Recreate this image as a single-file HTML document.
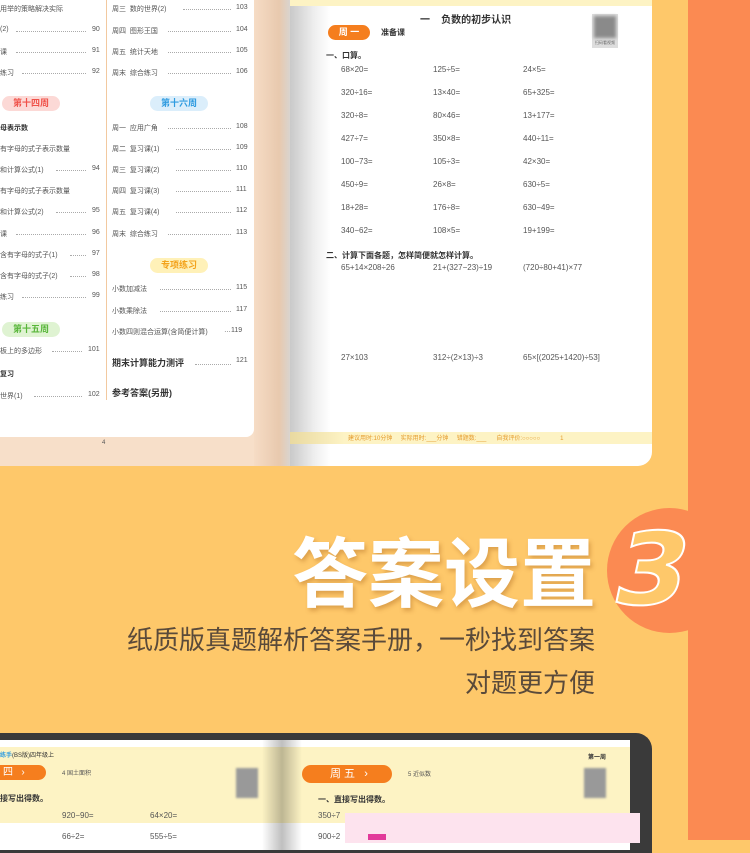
<!DOCTYPE html>
<html><head><meta charset="utf-8"><style>
*{margin:0;padding:0;box-sizing:border-box}
body{width:750px;height:840px;overflow:hidden;background:#fec86a;position:relative;font-family:"Liberation Sans","Noto Sans CJK SC",sans-serif;color:#333}
.abs{position:absolute;white-space:nowrap}
.t{font-size:7px;color:#555}
.dots{position:absolute;border-bottom:1px dotted #aaa;height:1px}
.m{font-size:8px;color:#555}
</style></head><body>
<!-- top book -->
<div class="abs" style="left:0;top:0;width:290px;height:466px;background:#f7dfc9"></div>
<div class="abs" style="left:0;top:0;width:254px;height:437px;background:#fff;border-radius:0 0 8px 0"></div>
<div class="abs" style="left:254px;top:0;width:36px;height:466px;background:linear-gradient(90deg,#f6dcc5,#e8c9ae 70%,#d9d4cf)"></div>
<div class="abs" style="left:106px;top:0;width:1px;height:400px;background:#f2c9a0"></div>
<div class="abs t" style="left:102px;top:440px;font-size:6px">4</div>
<!-- left col -->
<div class="abs t" style="left:0;top:4px">用举的策略解决实际</div>
<div class="abs t" style="left:0;top:26px">(2)</div><div class="dots" style="left:16px;top:31px;width:70px"></div><div class="abs t" style="left:92px;top:26px">90</div>
<div class="abs t" style="left:0;top:47px">课</div><div class="dots" style="left:16px;top:52px;width:70px"></div><div class="abs t" style="left:92px;top:47px">91</div>
<div class="abs t" style="left:0;top:68px">练习</div><div class="dots" style="left:22px;top:73px;width:64px"></div><div class="abs t" style="left:92px;top:68px">92</div>
<div class="abs" style="left:2px;top:96px;width:58px;height:15px;background:#fcd9d6;border-radius:8px;color:#f0524a;font-size:9px;font-weight:bold;text-align:center;line-height:15px">第十四周</div>
<div class="abs t" style="left:0;top:123px;font-weight:bold;color:#333">母表示数</div>
<div class="abs t" style="left:0;top:144px">有字母的式子表示数量</div>
<div class="abs t" style="left:0;top:165px">和计算公式(1)</div><div class="dots" style="left:56px;top:170px;width:30px"></div><div class="abs t" style="left:92px;top:165px">94</div>
<div class="abs t" style="left:0;top:186px">有字母的式子表示数量</div>
<div class="abs t" style="left:0;top:207px">和计算公式(2)</div><div class="dots" style="left:56px;top:212px;width:30px"></div><div class="abs t" style="left:92px;top:207px">95</div>
<div class="abs t" style="left:0;top:229px">课</div><div class="dots" style="left:16px;top:234px;width:70px"></div><div class="abs t" style="left:92px;top:229px">96</div>
<div class="abs t" style="left:0;top:250px">含有字母的式子(1)</div><div class="dots" style="left:70px;top:255px;width:16px"></div><div class="abs t" style="left:92px;top:250px">97</div>
<div class="abs t" style="left:0;top:271px">含有字母的式子(2)</div><div class="dots" style="left:70px;top:276px;width:16px"></div><div class="abs t" style="left:92px;top:271px">98</div>
<div class="abs t" style="left:0;top:292px">练习</div><div class="dots" style="left:22px;top:297px;width:64px"></div><div class="abs t" style="left:92px;top:292px">99</div>
<div class="abs" style="left:2px;top:322px;width:58px;height:15px;background:#dff3d2;border-radius:8px;color:#58b63a;font-size:9px;font-weight:bold;text-align:center;line-height:15px">第十五周</div>
<div class="abs t" style="left:0;top:346px">板上的多边形</div><div class="dots" style="left:52px;top:351px;width:30px"></div><div class="abs t" style="left:88px;top:346px">101</div>
<div class="abs t" style="left:0;top:369px;font-weight:bold;color:#333">复习</div>
<div class="abs t" style="left:0;top:391px">世界(1)</div><div class="dots" style="left:34px;top:396px;width:48px"></div><div class="abs t" style="left:88px;top:391px">102</div>
<!-- right col -->
<div class="abs t" style="left:112px;top:4px">周三&nbsp; 数的世界(2)</div><div class="dots" style="left:183px;top:9px;width:48px"></div><div class="abs t" style="left:236px;top:4px">103</div>
<div class="abs t" style="left:112px;top:26px">周四&nbsp; 图形王国</div><div class="dots" style="left:168px;top:31px;width:63px"></div><div class="abs t" style="left:236px;top:26px">104</div>
<div class="abs t" style="left:112px;top:47px">周五&nbsp; 统计天地</div><div class="dots" style="left:168px;top:52px;width:63px"></div><div class="abs t" style="left:236px;top:47px">105</div>
<div class="abs t" style="left:112px;top:68px">周末&nbsp; 综合练习</div><div class="dots" style="left:168px;top:73px;width:63px"></div><div class="abs t" style="left:236px;top:68px">106</div>
<div class="abs" style="left:150px;top:96px;width:58px;height:15px;background:#dbeefb;border-radius:8px;color:#2e9be0;font-size:9px;font-weight:bold;text-align:center;line-height:15px">第十六周</div>
<div class="abs t" style="left:112px;top:123px">周一&nbsp; 应用广角</div><div class="dots" style="left:168px;top:128px;width:63px"></div><div class="abs t" style="left:236px;top:123px">108</div>
<div class="abs t" style="left:112px;top:144px">周二&nbsp; 复习课(1)</div><div class="dots" style="left:176px;top:149px;width:55px"></div><div class="abs t" style="left:236px;top:144px">109</div>
<div class="abs t" style="left:112px;top:165px">周三&nbsp; 复习课(2)</div><div class="dots" style="left:176px;top:170px;width:55px"></div><div class="abs t" style="left:236px;top:165px">110</div>
<div class="abs t" style="left:112px;top:186px">周四&nbsp; 复习课(3)</div><div class="dots" style="left:176px;top:191px;width:55px"></div><div class="abs t" style="left:236px;top:186px">111</div>
<div class="abs t" style="left:112px;top:207px">周五&nbsp; 复习课(4)</div><div class="dots" style="left:176px;top:212px;width:55px"></div><div class="abs t" style="left:236px;top:207px">112</div>
<div class="abs t" style="left:112px;top:229px">周末&nbsp; 综合练习</div><div class="dots" style="left:168px;top:234px;width:63px"></div><div class="abs t" style="left:236px;top:229px">113</div>
<div class="abs" style="left:150px;top:258px;width:58px;height:15px;background:#fff1b8;border-radius:8px;color:#f3a21b;font-size:9px;font-weight:bold;text-align:center;line-height:15px">专项练习</div>
<div class="abs t" style="left:112px;top:284px">小数加减法</div><div class="dots" style="left:160px;top:289px;width:71px"></div><div class="abs t" style="left:236px;top:284px">115</div>
<div class="abs t" style="left:112px;top:306px">小数乘除法</div><div class="dots" style="left:160px;top:311px;width:71px"></div><div class="abs t" style="left:236px;top:306px">117</div>
<div class="abs t" style="left:112px;top:327px">小数四则混合运算(含简便计算)</div><div class="abs t" style="left:224px;top:327px">…119</div>
<div class="abs" style="left:112px;top:356px;font-size:9px;font-weight:bold;color:#333">期末计算能力测评</div><div class="dots" style="left:195px;top:364px;width:36px"></div><div class="abs t" style="left:236px;top:357px">121</div>
<div class="abs" style="left:112px;top:386px;font-size:9px;font-weight:bold;color:#333">参考答案(另册)</div>
<!-- right page -->
<div class="abs" style="left:290px;top:0;width:362px;height:466px;background:#fff;border-radius:0 0 14px 0;overflow:hidden">
 <div class="abs" style="left:0;top:0;width:40px;height:466px;background:linear-gradient(90deg,#c9c9c9,#eee 60%,#fff)"></div>
 <div class="abs" style="left:0;top:0;width:362px;height:6px;background:#fdf3c4"></div>
 <div class="abs" style="left:0;top:432px;width:362px;height:12px;background:linear-gradient(90deg,#e9d9a0,#fdf3c4 15%)"></div>
 <div class="abs" style="left:58px;top:433px;font-size:6px;color:#e59b2c">建议用时:10分钟&nbsp;&nbsp;&nbsp;&nbsp; 实际用时:___分钟&nbsp;&nbsp;&nbsp;&nbsp; 错题数:___&nbsp;&nbsp;&nbsp;&nbsp;&nbsp; 自我评价:○○○○○&nbsp;&nbsp;&nbsp;&nbsp;&nbsp;&nbsp;&nbsp;&nbsp;&nbsp;&nbsp;&nbsp; 1</div>
</div>
<div class="abs" style="left:420px;top:11px;font-size:10px;font-weight:bold;color:#333">一&nbsp;&nbsp;&nbsp; 负数的初步认识</div>
<div class="abs" style="left:592px;top:14px;width:26px;height:34px;background:#ddd"><div style="margin:2px;width:22px;height:22px;background:#8a8a8a;filter:blur(1.5px)"></div><div style="font-size:4px;text-align:center;color:#666">扫码看视频</div></div>
<div class="abs" style="left:328px;top:25px;width:42px;height:15px;background:#f57e1e;border-radius:8px;color:#fff;font-size:9px;font-weight:bold;line-height:15px;text-align:center">周 一</div>
<div class="abs" style="left:381px;top:27px;font-size:8px;font-weight:bold;color:#333">准备课</div>
<div class="abs" style="left:326px;top:50px;font-size:8px;font-weight:bold;color:#333">一、口算。</div>
<div class="abs m" style="left:341px;top:65px">68×20=</div><div class="abs m" style="left:433px;top:65px">125÷5=</div><div class="abs m" style="left:523px;top:65px">24×5=</div>
<div class="abs m" style="left:341px;top:88px">320÷16=</div><div class="abs m" style="left:433px;top:88px">13×40=</div><div class="abs m" style="left:523px;top:88px">65+325=</div>
<div class="abs m" style="left:341px;top:111px">320÷8=</div><div class="abs m" style="left:433px;top:111px">80×46=</div><div class="abs m" style="left:523px;top:111px">13+177=</div>
<div class="abs m" style="left:341px;top:134px">427÷7=</div><div class="abs m" style="left:433px;top:134px">350×8=</div><div class="abs m" style="left:523px;top:134px">440÷11=</div>
<div class="abs m" style="left:341px;top:157px">100−73=</div><div class="abs m" style="left:433px;top:157px">105÷3=</div><div class="abs m" style="left:523px;top:157px">42×30=</div>
<div class="abs m" style="left:341px;top:180px">450÷9=</div><div class="abs m" style="left:433px;top:180px">26×8=</div><div class="abs m" style="left:523px;top:180px">630÷5=</div>
<div class="abs m" style="left:341px;top:203px">18+28=</div><div class="abs m" style="left:433px;top:203px">176÷8=</div><div class="abs m" style="left:523px;top:203px">630−49=</div>
<div class="abs m" style="left:341px;top:226px">340−62=</div><div class="abs m" style="left:433px;top:226px">108×5=</div><div class="abs m" style="left:523px;top:226px">19+199=</div>
<div class="abs" style="left:326px;top:250px;font-size:8px;font-weight:bold;color:#333">二、计算下面各题，怎样简便就怎样计算。</div>
<div class="abs m" style="left:341px;top:263px">65+14×208÷26</div><div class="abs m" style="left:433px;top:263px">21+(327−23)÷19</div><div class="abs m" style="left:523px;top:263px">(720÷80+41)×77</div>
<div class="abs m" style="left:341px;top:353px">27×103</div><div class="abs m" style="left:433px;top:353px">312÷(2×13)÷3</div><div class="abs m" style="left:523px;top:353px">65×[(2025+1420)÷53]</div>
<!-- middle -->
<div class="abs" style="left:607px;top:508px;width:125px;height:125px;border-radius:50%;background:#fb8a52"></div>
<div class="abs" style="left:688px;top:0;width:62px;height:840px;background:#fb8a52"></div>
<div class="abs" style="left:292px;top:518px;font-size:76px;font-weight:bold;color:#fff;letter-spacing:0px;text-shadow:2px 3px 4px rgba(160,90,20,.35);font-family:'Noto Sans CJK SC',sans-serif;line-height:100px">答案设置</div>
<div class="abs" style="left:618px;top:520px;font-size:100px;font-weight:bold;color:#fec86a;line-height:100px;-webkit-text-stroke:2px #fff;font-family:'DejaVu Sans',sans-serif;transform:skewX(-12deg) scaleX(1.05)">3</div>
<div class="abs" style="left:127px;top:621px;font-size:26px;color:#5a4a3a;font-family:'Noto Sans CJK SC',sans-serif;line-height:36px">纸质版真题解析答案手册，一秒找到答案</div>
<div class="abs" style="left:465px;top:664px;font-size:26px;color:#5a4a3a;font-family:'Noto Sans CJK SC',sans-serif;line-height:36px">对题更方便</div>
<!-- bottom tablet -->
<div class="abs" style="left:0;top:733px;width:652px;height:120px;background:#3a3a3a;border-radius:0 16px 0 0"></div>
<div class="abs" style="left:0;top:740px;width:630px;height:110px;background:#fff"></div>
<div class="abs" style="left:0;top:747px;width:630px;height:76px;background:#fdf3c4"></div>
<div class="abs" style="left:262px;top:740px;width:40px;height:110px;background:linear-gradient(90deg,rgba(0,0,0,0),rgba(0,0,0,.25) 50%,rgba(0,0,0,0))"></div>
<div class="abs" style="left:0;top:750px;font-size:6px;color:#333"><span style="color:#2e9be0;font-weight:bold">练手</span>(BS版)四年级上</div>
<div class="abs" style="left:0;top:765px;width:46px;height:15px;background:#f57e1e;border-radius:0 8px 8px 0;color:#fff;font-size:10px;line-height:15px;padding-left:3px">四 &nbsp;&nbsp;›</div>
<div class="abs" style="left:62px;top:768px;font-size:6px;color:#555">4 国土面积</div>
<div class="abs" style="left:236px;top:768px;width:22px;height:30px;background:#999;filter:blur(1px)"></div>
<div class="abs" style="left:0;top:793px;font-size:8px;font-weight:bold;color:#333">接写出得数。</div>
<div class="abs m" style="left:62px;top:811px">920−90=</div><div class="abs m" style="left:150px;top:811px">64×20=</div>
<div class="abs m" style="left:62px;top:832px">66÷2=</div><div class="abs m" style="left:150px;top:832px">555÷5=</div>
<div class="abs" style="left:302px;top:765px;width:90px;height:18px;background:#f57e1e;border-radius:9px;color:#fff;font-size:11px;line-height:18px;padding-left:28px">周 五 &nbsp;&nbsp;›</div>
<div class="abs" style="left:408px;top:769px;font-size:6px;color:#555">5 近似数</div>
<div class="abs" style="left:588px;top:752px;font-size:6px;color:#333;font-weight:bold">第一周</div>
<div class="abs" style="left:584px;top:768px;width:22px;height:30px;background:#999;filter:blur(1px)"></div>
<div class="abs" style="left:318px;top:794px;font-size:8px;font-weight:bold;color:#333">一、直接写出得数。</div>
<div class="abs m" style="left:318px;top:811px">350÷7</div><div class="abs m" style="left:318px;top:832px">900÷2</div>
<div class="abs" style="left:345px;top:813px;width:295px;height:30px;background:#fde3ee"></div>
<div class="abs" style="left:368px;top:834px;width:18px;height:6px;background:#e23a9a"></div>
</body></html>
